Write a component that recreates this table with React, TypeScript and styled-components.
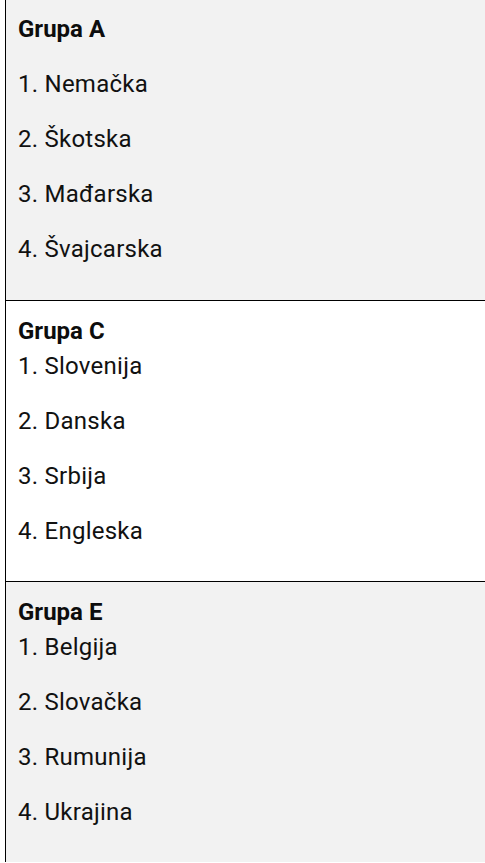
import React from "react";
import styled, { createGlobalStyle } from "styled-components";

const Global = createGlobalStyle`
  html, body { margin: 0; padding: 0; background: #ffffff; overflow: hidden; }
  body { font-family: Roboto, "Noto Sans", Arial, sans-serif; color: #111111; }
`;

const Column = styled.div`
  margin-left: 5px;
  border-left: 1px solid #000000;
  display: flex;
  flex-direction: column;
`;

const Group = styled.section<{ $shade: boolean; $first?: boolean }>`
  background: ${(p) => (p.$shade ? "#f2f2f2" : "#ffffff")};
  border-top: ${(p) => (p.$first ? "none" : "1px solid #000000")};
  padding: ${(p) => (p.$first ? "12px" : "13px")} 12px 13px 12px;
  height: ${(p) => (p.$first ? "300px" : "281px")};
  box-sizing: border-box;
  overflow: hidden;
`;

const Line = styled.p`
  margin: 0 0 20px 0;
  font-size: 24px;
  line-height: 35px;
  font-weight: 400;
  letter-spacing: 0.25px;
`;

const Title = styled.strong`
  font-weight: 700;
  font-size: 24px;
  letter-spacing: 0;
  color: #0d0d0d;
`;

const groups = [
  { name: "Grupa A", teams: ["Nemačka", "Škotska", "Mađarska", "Švajcarska"], split: true },
  { name: "Grupa C", teams: ["Slovenija", "Danska", "Srbija", "Engleska"], split: false },
  { name: "Grupa E", teams: ["Belgija", "Slovačka", "Rumunija", "Ukrajina"], split: false },
];

export default function App() {
  return (
    <>
      <Global />
      <Column>
        {groups.map((g, gi) => (
          <Group key={g.name} $shade={gi % 2 === 0} $first={gi === 0}>
            {g.split ? (
              <>
                <Line>
                  <Title>{g.name}</Title>
                </Line>
                {g.teams.map((t, i) => (
                  <Line key={t}>{`${i + 1}. ${t}`}</Line>
                ))}
              </>
            ) : (
              <>
                <Line>
                  <Title>{g.name}</Title>
                  <br />
                  {`1. ${g.teams[0]}`}
                </Line>
                {g.teams.slice(1).map((t, i) => (
                  <Line key={t}>{`${i + 2}. ${t}`}</Line>
                ))}
              </>
            )}
          </Group>
        ))}
      </Column>
    </>
  );
}
